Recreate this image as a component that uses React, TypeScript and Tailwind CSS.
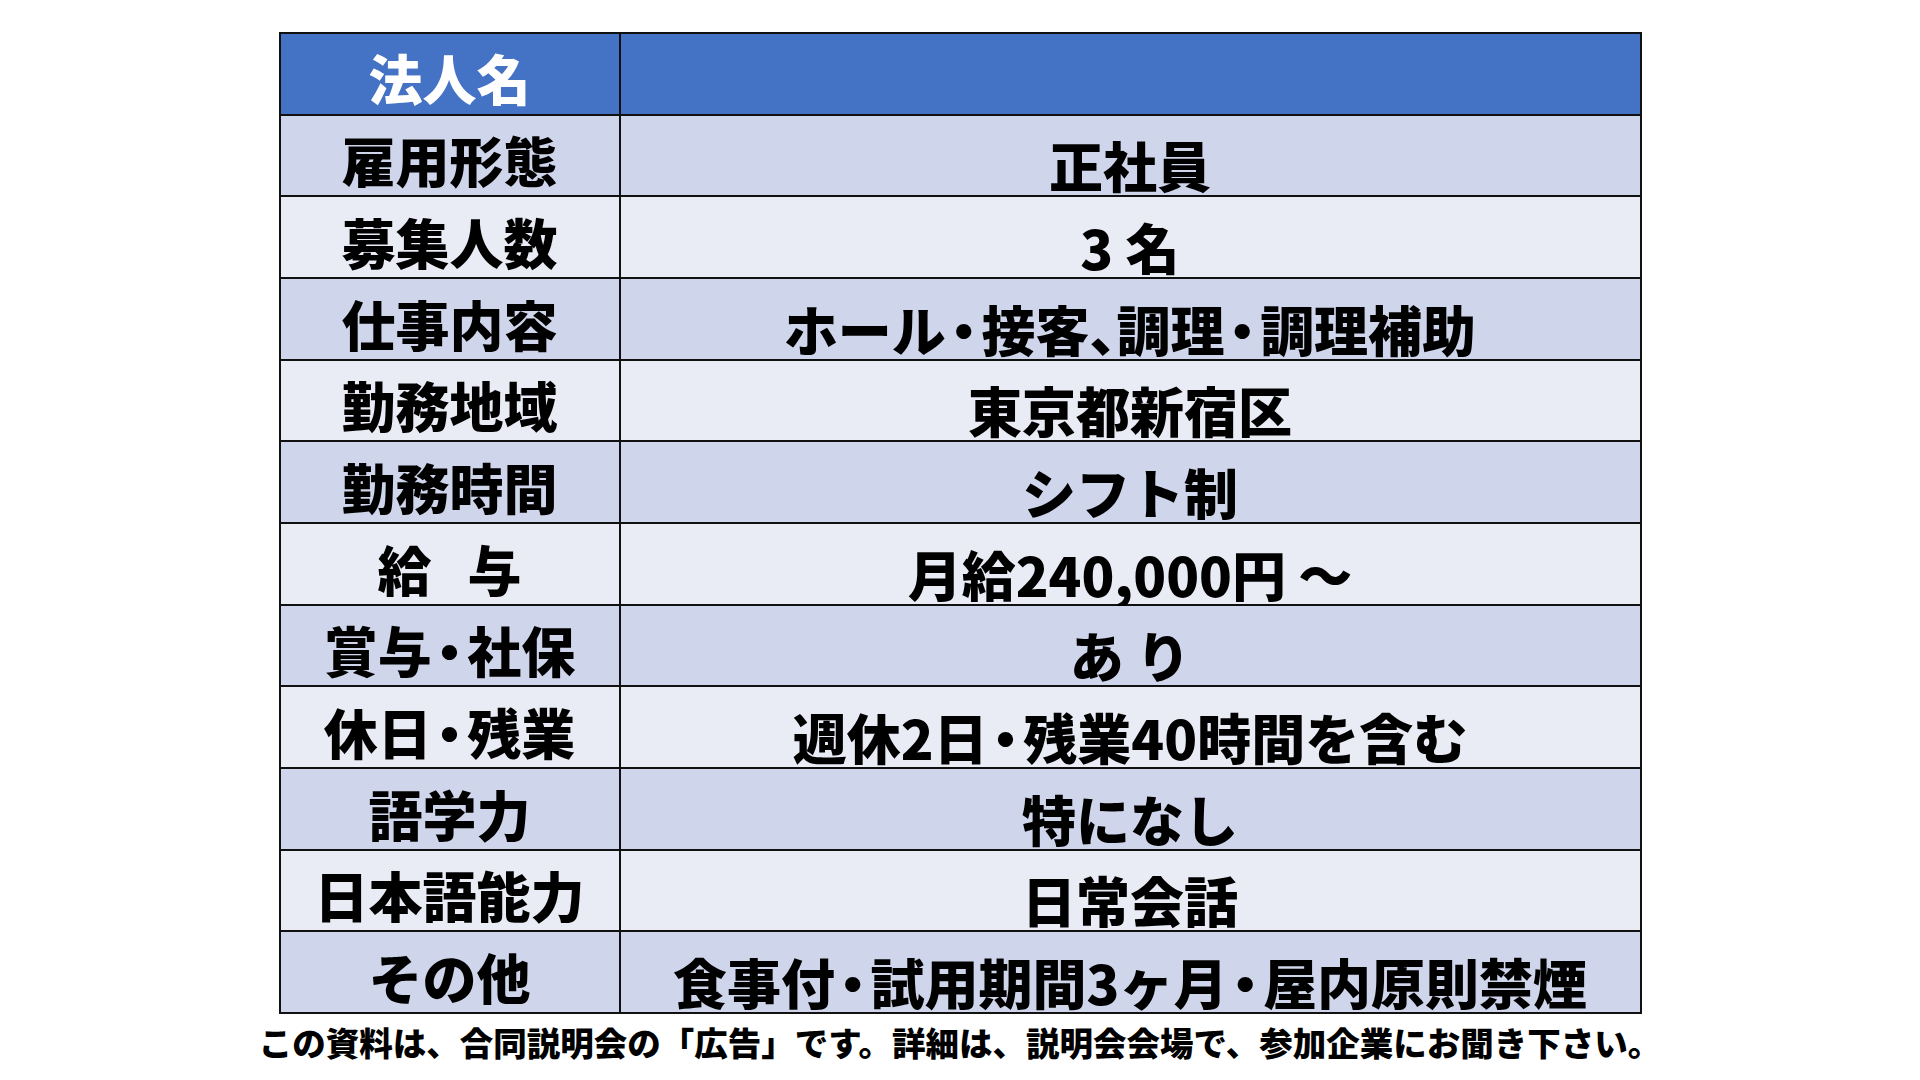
import React from "react"

// half-width middle dot and comma, as the slide font sets them
function tight(text: string) {
  return text.split(/([・、])/).map((part, i) => {
    if (part === "・") {
      return (
        <span key={i} className="[font-feature-settings:'halt'] px-[0.08em]">
          ・
        </span>
      )
    }
    if (part === "、") {
      return (
        <span key={i} className="[font-feature-settings:'halt']">
          、
        </span>
      )
    }
    return part
  })
}

const rows: { label: React.ReactNode; value: React.ReactNode }[] = [
  { label: "雇用形態", value: "正社員" },
  { label: "募集人数", value: "3 名" },
  { label: "仕事内容", value: tight("ホール・接客、調理・調理補助") },
  { label: "勤務地域", value: "東京都新宿区" },
  { label: "勤務時間", value: "シフト制" },
  {
    label: (
      <>
        給<span className="inline-block w-[36px]" />与
      </>
    ),
    value: "月給240,000円 ～",
  },
  { label: tight("賞与・社保"), value: "あ り" },
  { label: tight("休日・残業"), value: tight("週休2日・残業40時間を含む") },
  { label: "語学力", value: "特になし" },
  { label: "日本語能力", value: "日常会話" },
  { label: "その他", value: tight("食事付・試用期間3ヶ月・屋内原則禁煙") },
]

export default function App() {
  return (
    <div
      className="w-[1920px] h-[1080px] bg-white flex flex-col items-center pt-[32px] text-black"
      style={{ fontFamily: '"Noto Sans CJK JP", "Noto Sans", sans-serif' }}
    >
      {/* Table */}
      <div className="w-[1363px] h-[982px] bg-[#111] p-[2px] grid grid-cols-[338px_1fr] grid-rows-[repeat(12,1fr)] gap-[2px]">
        <div className="bg-[#4472C4] flex items-center justify-center pt-[8px] text-[54px] leading-none font-black text-white">
          法人名
        </div>
        <div className="bg-[#4472C4]" />

        {rows.map((row, i) => {
          const bg = i % 2 === 0 ? "bg-[#CFD5EA]" : "bg-[#E9EBF5]"
          return (
            <React.Fragment key={i}>
              <div
                className={`${bg} flex items-center justify-center pt-[10px] text-[54px] leading-none font-black whitespace-nowrap`}
              >
                <span>{row.label}</span>
              </div>
              <div
                className={`${bg} flex items-center justify-center pt-[20px] text-[54px] leading-none font-black whitespace-nowrap`}
              >
                <span>{row.value}</span>
              </div>
            </React.Fragment>
          )
        })}
      </div>

      {/* Footer note */}
      <p className="mt-[11px] text-[33.5px] leading-none font-black whitespace-nowrap">
        この資料は、合同説明会の「広告」です。詳細は、説明会会場で、参加企業にお聞き下さい。
      </p>
    </div>
  )
}
